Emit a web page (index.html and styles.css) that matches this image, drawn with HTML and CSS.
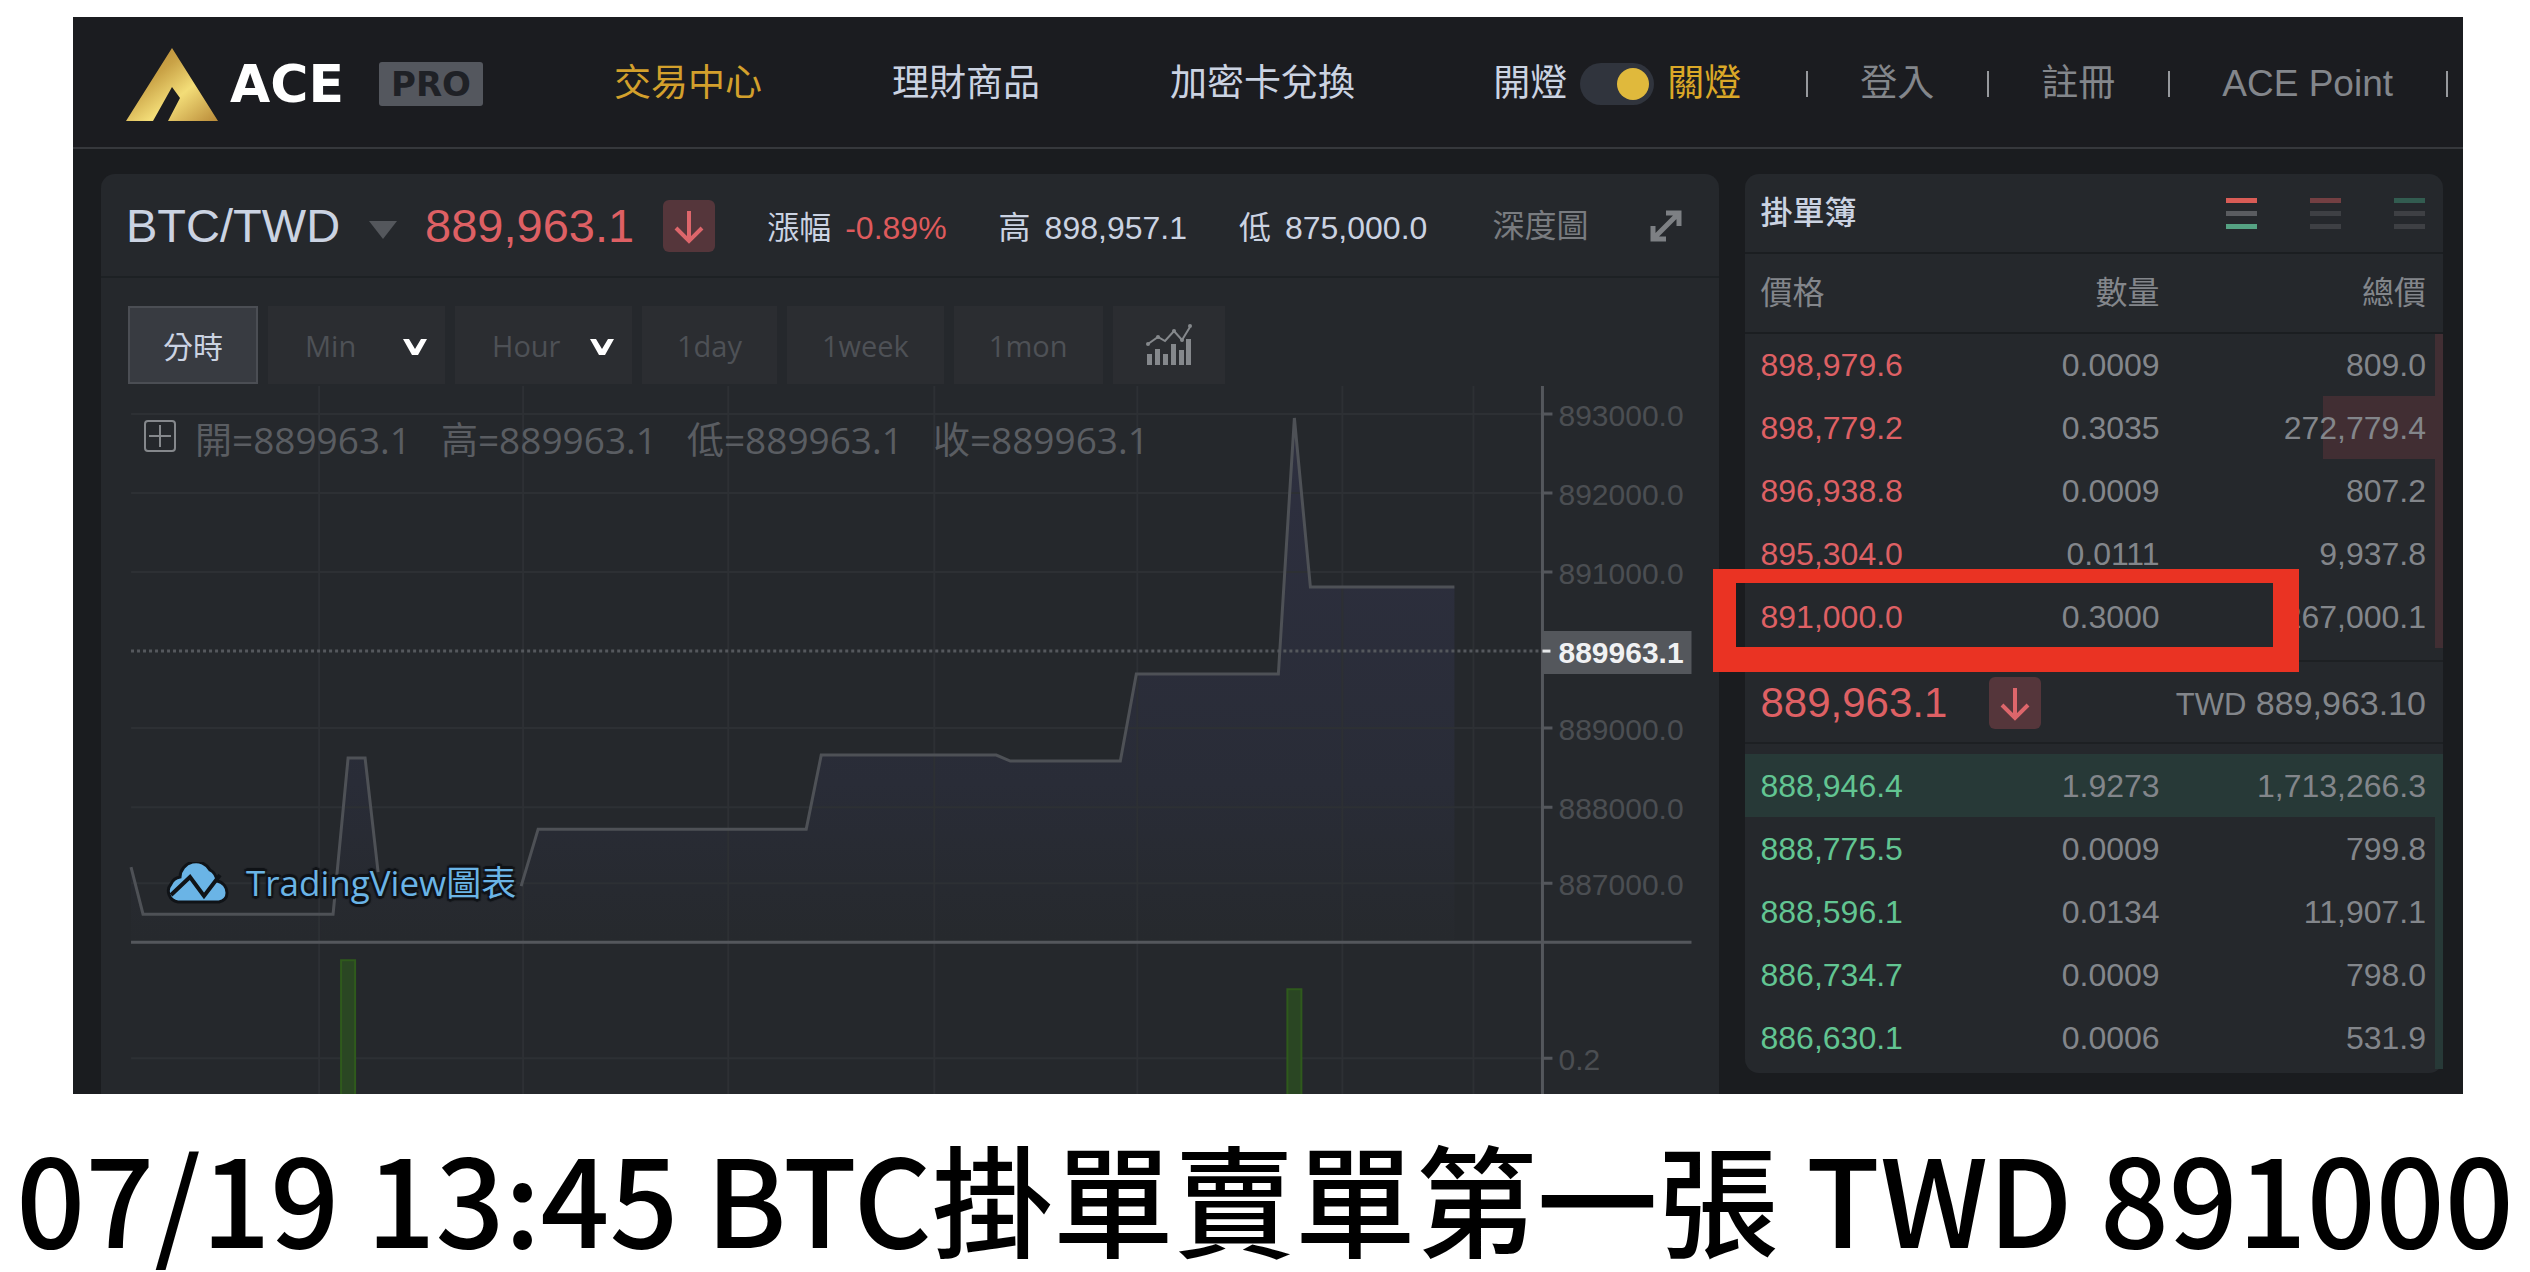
FILE: index.html
```html
<!DOCTYPE html>
<html lang="zh-Hant">
<head>
<meta charset="utf-8">
<title>ACE PRO BTC/TWD</title>
<link rel="stylesheet" href="styles.css">
</head>
<body>
<figure class="sheet">
  <div class="app">
    <header class="topbar">
      <a class="brand" href="#">
        <svg class="brand-mark" viewBox="0 0 92 73" aria-hidden="true">
          <defs>
            <linearGradient id="gold" x1="0" y1="0" x2="1" y2="1">
              <stop offset="0" stop-color="#b07a2c"/>
              <stop offset=".35" stop-color="#c9a246"/>
              <stop offset=".62" stop-color="#f3dd78"/>
              <stop offset="1" stop-color="#b98a38"/>
            </linearGradient>
          </defs>
          <path fill="url(#gold)" d="M46 0 92 73H42L54 50 46 39 27 73H0Z"/>
        </svg>
        <span class="brand-name">ACE</span>
        <span class="brand-tag">PRO</span>
      </a>
      <nav class="menu">
        <a class="menu-on" href="#">交易中心</a>
        <a href="#">理財商品</a>
        <a href="#">加密卡兌換</a>
      </nav>
      <div class="account">
        <label class="theme">
          <span>開燈</span>
          <input class="switch" type="checkbox" checked>
          <span class="theme-on">關燈</span>
        </label>
        <a class="account-link" href="#">登入</a>
        <a class="account-link" href="#">註冊</a>
        <a class="account-link" href="#">ACE Point</a>
        <span class="account-link account-end"></span>
      </div>
    </header>

    <main class="board">
      <section class="panel market">
        <div class="ticker">
          <button class="pair" type="button">BTC/TWD
            <svg class="caret" viewBox="0 0 28 18" aria-hidden="true"><path fill="#54575c" d="M0 0h28L14 18Z"/></svg>
          </button>
          <strong class="last">889,963.1</strong>
          <span class="down"><svg viewBox="0 0 52 52" aria-hidden="true"><path d="M26 11V41M13 28 26 41 39 28"/></svg></span>
          <dl class="stats">
            <div><dt>漲幅</dt><dd class="fall">-0.89%</dd></div>
            <div><dt>高</dt><dd>898,957.1</dd></div>
            <div><dt>低</dt><dd>875,000.0</dd></div>
          </dl>
          <a class="depth" href="#">深度圖</a>
          <button class="expand" type="button" aria-label="全螢幕">
            <svg viewBox="0 0 34 34" aria-hidden="true"><path d="M17 4H30V17M30 4 4 30M4 17V30H17" fill="none" stroke="#7d8084" stroke-width="5"/></svg>
          </button>
        </div>

        <div class="chartbox">
          <div class="tools">
            <button class="tool tool-on" type="button">分時</button>
            <label class="tool tool-pick"><select aria-label="分鐘"><option>Min</option></select>
              <svg viewBox="0 0 24 16" aria-hidden="true"><path fill="#fff" d="M0 0H6L12 10 18 0H24L15 16H9Z"/></svg></label>
            <label class="tool tool-pick"><select aria-label="小時"><option>Hour</option></select>
              <svg viewBox="0 0 24 16" aria-hidden="true"><path fill="#fff" d="M0 0H6L12 10 18 0H24L15 16H9Z"/></svg></label>
            <button class="tool" type="button">1day</button>
            <button class="tool" type="button">1week</button>
            <button class="tool" type="button">1mon</button>
            <button class="tool tool-icon" type="button" aria-label="指標">
              <svg viewBox="0 0 46 42" aria-hidden="true">
                <path fill="#85888c" d="M1 30h5v11h-5ZM9 25h5v16h-5ZM17 30h5v11h-5ZM25 20h5v21h-5ZM33 26h5v15h-5ZM40 15h5v26h-5Z"/>
                <path fill="none" stroke="#85888c" stroke-width="2" d="M2 20 12 13 19 17 28 7 36 16 44 3"/>
                <circle cx="2" cy="20" r="2" fill="#85888c"/><circle cx="12" cy="13" r="2" fill="#85888c"/><circle cx="28" cy="7" r="2" fill="#85888c"/><circle cx="36" cy="16" r="2" fill="#85888c"/><circle cx="44" cy="2" r="2" fill="#85888c"/>
              </svg>
            </button>
          </div>

          <div class="chart">
            <svg class="plot" viewBox="0 0 1563 708" role="img" aria-label="BTC/TWD 分時圖">
              <defs>
                <linearGradient id="area" gradientUnits="userSpaceOnUse" x1="0" y1="32" x2="0" y2="554">
                  <stop offset="0" stop-color="#2e3040"/>
                  <stop offset=".7" stop-color="#292c37"/>
                  <stop offset="1" stop-color="#26292d"/>
                </linearGradient>
              </defs>
              <path fill="url(#area)" d="M3 481 15 528H205L220 372H237L252 504H390L410 443H678L693 369H868L882 375H992L1008 288H1150L1166 32 1182 201H1326V554H3Z"/>
              <path class="grid" d="M191 0V708M395 0V708M600 0V708M806 0V708M1009 0V708M1214 0V708M1345 0V708M3 28H1414M3 107H1414M3 186H1414M3 342H1414M3 421H1414M3 497H1414M3 672H1414"/>
              <path class="trend" d="M3 481 15 528H205L220 372H237L250 486M393 500 410 443H678L693 369H868L882 375H992L1008 288H1150L1166 32 1182 201H1326"/>
              <path fill="none" stroke="#55585d" stroke-width="3" stroke-dasharray="3 3" d="M3 265H1414"/>
              <path fill="#2a4623" stroke="#2f5a1c" stroke-width="2" d="M213 574h14v140h-14ZM1159 603h14v111h-14Z"/>
              <path class="axis" d="M1414 0V708M3 556H1563M1414 28h10M1414 107h10M1414 186h10M1414 342h10M1414 421h10M1414 497h10M1414 672h10"/>
              <path fill="#54575c" d="M1413 245h150v43h-150Z"/>
              <path stroke="#e6e8ea" stroke-width="3" d="M1414 265h8"/>
              <g class="scale">
                <text x="1430" y="40">893000.0</text>
                <text x="1430" y="119">892000.0</text>
                <text x="1430" y="198">891000.0</text>
                <text class="scale-now" x="1430" y="277">889963.1</text>
                <text x="1430" y="354">889000.0</text>
                <text x="1430" y="433">888000.0</text>
                <text x="1430" y="509">887000.0</text>
                <text x="1430" y="684">0.2</text>
              </g>
            </svg>
            <div class="legend">
              <svg viewBox="0 0 34 34" aria-hidden="true"><path fill="none" stroke="#85888c" stroke-width="2" d="M5 2H29Q32 2 32 5V29Q32 32 29 32H5Q2 32 2 29V5Q2 2 5 2ZM17 6V28M6 17H28"/></svg>
              <span>開=889963.1</span><span>高=889963.1</span><span>低=889963.1</span><span>收=889963.1</span>
            </div>
            <a class="credit" href="#">
              <svg viewBox="0 0 64 42" aria-hidden="true">
                <path fill="#6ab4e6" stroke="#101317" stroke-width="3" d="M12 40A11 11 0 0 1 5 22 12 12 0 0 1 14 15 16 16 0 0 1 44 8Q50 11 51 19A12 12 0 0 1 61 31Q61 38 53 40Z"/>
                <path fill="none" stroke="#101317" stroke-width="4" d="M5 33 24 15 38 34 54 13"/>
              </svg>
              TradingView圖表
            </a>
          </div>
        </div>
      </section>

      <section class="panel book">
        <div class="book-head">
          <h2>掛單簿</h2>
          <div class="views">
            <button class="view view-both" type="button" aria-label="全部"><i></i><i></i><i></i></button>
            <button class="view view-asks" type="button" aria-label="賣單"><i></i><i></i><i></i></button>
            <button class="view view-bids" type="button" aria-label="買單"><i></i><i></i><i></i></button>
          </div>
        </div>
        <table class="orders asks">
          <thead><tr><th>價格</th><th>數量</th><th>總價</th></tr></thead>
          <tbody>
            <tr style="--depth:1.2%"><td>898,979.6</td><td>0.0009</td><td>809.0</td></tr>
            <tr style="--depth:17.2%"><td>898,779.2</td><td>0.3035</td><td>272,779.4</td></tr>
            <tr style="--depth:1.2%"><td>896,938.8</td><td>0.0009</td><td>807.2</td></tr>
            <tr style="--depth:1.2%"><td>895,304.0</td><td>0.0111</td><td>9,937.8</td></tr>
            <tr style="--depth:1.2%"><td>891,000.0</td><td>0.3000</td><td>267,000.1</td></tr>
          </tbody>
        </table>
        <div class="mid">
          <strong>889,963.1</strong>
          <span class="down"><svg viewBox="0 0 52 52" aria-hidden="true"><path d="M26 11V41M13 28 26 41 39 28"/></svg></span>
          <span class="mid-value"><small>TWD</small> 889,963.10</span>
        </div>
        <table class="orders bids">
          <tbody>
            <tr style="--depth:100%"><td>888,946.4</td><td>1.9273</td><td>1,713,266.3</td></tr>
            <tr style="--depth:1.2%"><td>888,775.5</td><td>0.0009</td><td>799.8</td></tr>
            <tr style="--depth:1.2%"><td>888,596.1</td><td>0.0134</td><td>11,907.1</td></tr>
            <tr style="--depth:1.2%"><td>886,734.7</td><td>0.0009</td><td>798.0</td></tr>
            <tr style="--depth:1.2%"><td>886,630.1</td><td>0.0006</td><td>531.9</td></tr>
          </tbody>
        </table>
        <div class="marker"></div>
      </section>
    </main>
  </div>
  <figcaption class="caption">07/19 13:45 BTC掛單賣單第一張 TWD 891000</figcaption>
</figure>
</body>
</html>
```
FILE: styles.css
```css
* { box-sizing: border-box; }

body {
  margin: 0;
  background: #fff;
  font-family: "Liberation Sans", "Noto Sans CJK TC", sans-serif;
}

a { color: inherit; text-decoration: none; }

button, select {
  margin: 0;
  padding: 0;
  border: 0;
  background: none;
  color: inherit;
  font: inherit;
}

svg { display: block; }

.sheet { margin: 0; padding-top: 17px; }

.app {
  margin: 0 67px 0 73px;
  overflow: hidden;
  background: #1a1c1f;
  color: #cbd3e2;
}

/* Top bar */
.topbar {
  display: flex;
  align-items: center;
  height: 132px;
  padding: 4px 15px 0 53px;
  border-bottom: 2px solid #36383c;
  background: #1b1c20;
  font-size: 37px;
  line-height: 48px;
  white-space: nowrap;
}

.brand { display: flex; align-items: center; }
.brand-mark { width: 92px; height: 73px; margin-right: 12px; }
.brand-name {
  width: 149px;
  color: #fff;
  font: bold 52px/60px "DejaVu Sans", sans-serif;
}
.brand-tag {
  width: 104px;
  border-radius: 3px;
  background: #54575e;
  color: #1f2126;
  font: bold 34px/44px "DejaVu Sans", sans-serif;
  text-align: center;
}

.menu { display: flex; gap: 130px; margin-left: 131px; }
.menu-on { color: #d3a02c; }

.account { display: flex; align-items: center; margin-left: auto; color: #83868b; }
.theme { display: flex; align-items: center; gap: 13px; margin-right: 65px; color: #cbd3e2; }
.theme-on { color: #dba827; }

.switch {
  appearance: none;
  width: 74px;
  height: 42px;
  margin: 0;
  padding: 5px;
  border-radius: 21px;
  background: #30343d;
}
.switch::before {
  content: "";
  display: block;
  width: 32px;
  height: 32px;
  border-radius: 50%;
  background: #e0b93c;
}
.switch:checked::before { margin-left: auto; }

.account-link { display: flex; align-items: center; }
.account-link::before {
  content: "";
  width: 2px;
  height: 26px;
  margin-right: 52px;
  background: #97999d;
}
.account-link + .account-link { margin-left: 53px; }
.account-end::before { margin-right: 0; }

/* Panels */
.board {
  display: grid;
  grid-template-columns: 44fr 19fr;
  gap: 26px;
  padding: 25px 20px 0 28px;
}
.panel { min-width: 0; border-radius: 14px; background: #25282c; }

.market { border-radius: 14px 14px 0 0; }

.ticker {
  display: flex;
  align-items: center;
  height: 104px;
  padding: 2px 36px 0 25px;
  border-bottom: 2px solid #1d2124;
  font-size: 32px;
  line-height: 48px;
  white-space: nowrap;
}
.pair { display: flex; align-items: center; gap: 29px; font-size: 47px; }
.caret { width: 28px; height: 18px; margin-top: 8px; }
.last { margin-left: 28px; color: #de6064; font-size: 47px; font-weight: 400; }

.down {
  width: 52px;
  height: 52px;
  margin-left: 29px;
  border-radius: 6px;
  background: #55363b;
}
.down path { fill: none; stroke: #dd666b; stroke-width: 4; }

.stats { display: flex; gap: 52px; margin: 0 0 0 52px; padding-top: 3px; }
.stats div { display: flex; gap: 14px; }
.stats dd { margin: 0; }
.stats .fall { color: #de5a5c; }
.depth { margin-left: auto; color: #797c80; }
.expand { width: 34px; height: 34px; margin-left: 60px; }

.chartbox { padding: 28px 27px 0; }

.tools {
  display: flex;
  gap: 10px;
  color: #4e5156;
  font-family: "Open Sans", "Noto Sans CJK TC", sans-serif;
  font-size: 29px;
}
.tool { height: 78px; padding: 0 35px; background: #2b2d31; }
.tool-on {
  padding: 0 33px;
  border: 2px solid #4b4e54;
  background: #383b41;
  color: #cbd3e2;
  font-size: 30px;
}
.tool-pick {
  display: flex;
  align-items: center;
  width: 177px;
  padding: 0 18px 0 37px;
}
.tool-pick select { flex: 1; min-width: 0; appearance: none; outline: 0; }
.tool-pick svg { width: 24px; height: 16px; margin-top: 4px; }
.tool-icon { padding: 0 33px; }
.tool-icon svg { width: 46px; height: 42px; }

/* Chart */
.chart { position: relative; margin-top: 2px; }
.plot { width: 100%; height: auto; overflow: hidden; }
.grid { fill: none; stroke: #2d3034; stroke-width: 2; }
.trend { fill: none; stroke: #4e5156; stroke-width: 3; }
.axis { fill: none; stroke: #54575c; stroke-width: 3; }
.scale { fill: #4b4e52; font-size: 30px; }
.scale-now { fill: #f0f1f3; font-weight: 700; }

.legend {
  position: absolute;
  top: 30px;
  left: 15px;
  display: flex;
  align-items: center;
  gap: 30px;
  color: #5a5d62;
  font: 37px/48px "Open Sans", "Noto Sans CJK TC", sans-serif;
  white-space: nowrap;
}
.legend svg { width: 34px; height: 34px; margin: -8px -12px 0 0; }

.credit {
  position: absolute;
  bottom: 187px;
  left: 38px;
  display: flex;
  align-items: center;
  gap: 16px;
  color: #6ab4e6;
  font: 35px/48px "Open Sans", "Noto Sans CJK TC", sans-serif;
  text-shadow: 2px 2px 1px #101317, -2px -2px 1px #101317, 2px -2px 1px #101317, -2px 2px 1px #101317, 0 3px 1px #101317, 0 -3px 1px #101317;
  white-space: nowrap;
}
.credit svg { width: 64px; height: 42px; }

/* Order book */
.book {
  position: relative;
  align-self: start;
  margin-bottom: 21px;
  padding-bottom: 4px;
}
.book-head {
  display: flex;
  align-items: center;
  justify-content: space-between;
  height: 80px;
  padding: 0 18px 0 16px;
  border-bottom: 2px solid #1b1e21;
}
.book-head h2 { margin: 0; font-size: 32px; font-weight: 500; line-height: 48px; }

.views { display: flex; gap: 53px; }
.view { display: grid; gap: 8px; width: 31px; }
.view i { height: 5px; background: #3e4044; }
.view-both i { background: #5a5c60; }
.view-both i:first-child { background: #d95c56; }
.view-both i:last-child { background: #55a283; }
.view-asks i:first-child { background: #733f42; }
.view-bids i:first-child { background: #325c50; }

.orders {
  width: 100%;
  border-collapse: collapse;
  table-layout: fixed;
  color: #83868b;
  font-size: 32px;
  line-height: 40px;
}
.orders th, .orders td { height: 63px; padding: 0; font-weight: 400; text-align: right; }
.orders th { height: 79px; border-bottom: 2px solid #1b1e21; }
.orders th:first-child, .orders td:first-child { width: 33%; padding-left: 16px; text-align: left; }
.orders th:nth-child(2), .orders td:nth-child(2) { width: 27%; padding-right: 4px; }
.orders th:last-child, .orders td:last-child { padding-right: 17px; }

.orders tbody tr {
  background: linear-gradient(var(--fill), var(--fill)) right / var(--depth) 100% no-repeat;
}
.asks { --fill: #412e33; }
.bids { --fill: #273937; }
.asks td:first-child { color: #de6064; }
.bids td:first-child { color: #62c592; }

.mid {
  display: flex;
  align-items: center;
  height: 84px;
  margin: 12px 0 10px;
  padding: 2px 17px 0 16px;
  border: solid #1d2023;
  border-width: 2px 0;
}
.mid strong { color: #de6064; font-size: 42px; font-weight: 400; }
.mid .down { margin-left: 42px; }
.mid-value { margin-left: auto; color: #83868b; font-size: 34px; }
.mid-value small { font-size: 31px; }

/* Frame drawn over the best ask */
.marker {
  position: absolute;
  top: 395px;
  left: -32px;
  width: 84%;
  height: 103px;
  border: solid #ea3323;
  border-width: 14px 26px 25px 23px;
}

.caption {
  padding-top: 28px;
  color: #000;
  font: 500 121px/148px "Noto Sans CJK TC", sans-serif;
  text-align: center;
  white-space: nowrap;
}
```
